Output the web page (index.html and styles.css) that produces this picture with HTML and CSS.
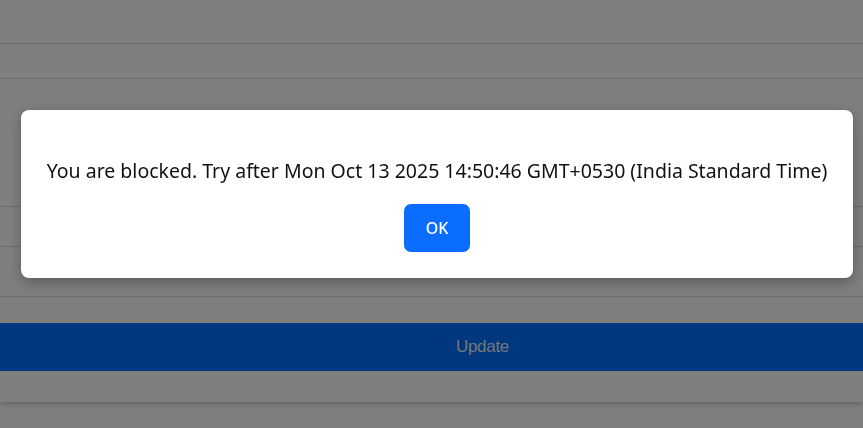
FILE: index.html
```html
<!DOCTYPE html>
<html lang="en">
<head>
<meta charset="utf-8">
<title>Blocked</title>
<link rel="stylesheet" href="styles.css">
</head>
<body>
<div class="page">
  <div class="card">
    <div class="row row-a"></div>
    <div class="row row-b"></div>
    <div class="row row-c"></div>
    <div class="row row-d"></div>
    <div class="row row-e"></div>
    <div class="actions">
      <button class="update" type="button">Update</button>
    </div>
  </div>
</div>
<div class="backdrop">
  <div class="modal">
    <p class="message">You are blocked. Try after Mon Oct 13 2025 14:50:46 GMT+0530 (India Standard Time)</p>
    <button class="ok" type="button">OK</button>
  </div>
</div>
</body>
</html>
```
FILE: styles.css
```css
* { box-sizing: border-box; }
html, body { margin: 0; padding: 0; }
body {
  width: 863px;
  height: 428px;
  overflow: hidden;
  background: #ffffff;
  font-family: "Liberation Sans", Arial, sans-serif;
}
.page { height: 428px; }
.card {
  background: #ffffff;
  box-shadow: 0 2px 6px rgba(0,0,0,0.25);
  padding-bottom: 31px;
}
.row { border-bottom: 1px solid #dcdcdc; }
.row-a { height: 44px; }
.row-b { height: 35px; }
.row-c { height: 128px; }
.row-d { height: 40px; }
.row-e { height: 50px; }
.actions { padding-top: 26px; }
.update {
  display: block;
  width: 100%;
  height: 48px;
  border: 0;
  padding: 0 0 0 102px;
  background: #006efe;
  color: #e4ecf6;
  font-family: "Liberation Sans", Arial, sans-serif;
  font-size: 17px;
  letter-spacing: -0.3px;
}
.backdrop {
  position: fixed;
  inset: 0;
  background: rgba(0,0,0,0.5);
  display: flex;
  justify-content: center;
  padding: 110px 10px 0 21px;
}
.modal {
  width: 832px;
  height: 168px;
  background: #ffffff;
  border-radius: 8px;
  box-shadow: 0 4px 14px rgba(0,0,0,0.3);
  display: flex;
  flex-direction: column;
  align-items: center;
  padding-top: 47px;
}
.message {
  margin: 0;
  font-family: "Noto Sans", "Open Sans", sans-serif;
  font-size: 19.5px;
  line-height: 27px;
  color: #111;
  white-space: nowrap;
}
.ok {
  margin-top: 20px;
  width: 66px;
  height: 48px;
  border: 0;
  border-radius: 7px;
  background: #0b6dfd;
  color: #ffffff;
  font-family: "Noto Sans", "Open Sans", sans-serif;
  font-size: 16px;
  font-weight: 500;
}
```
